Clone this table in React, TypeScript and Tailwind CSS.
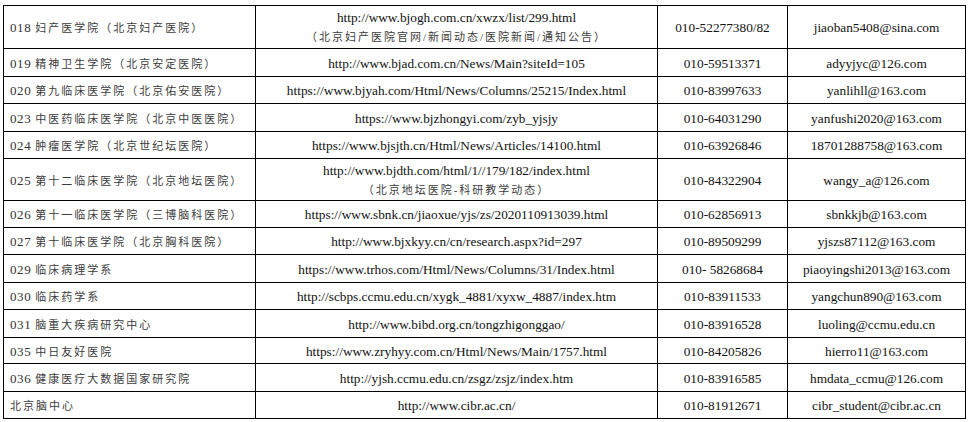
const rows = [
  { code: "018", name: "妇产医学院（北京妇产医院）", url: "http://www.bjogh.com.cn/xwzx/list/299.html", note: "（北京妇产医院官网/新闻动态/医院新闻/通知公告）", phone: "010-52277380/82", email: "jiaoban5408@sina.com", h: "h-[43px]" },
  { code: "019", name: "精神卫生学院（北京安定医院）", url: "http://www.bjad.com.cn/News/Main?siteId=105", phone: "010-59513371", email: "adyyjyc@126.com", h: "h-[28px]" },
  { code: "020", name: "第九临床医学院（北京佑安医院）", url: "https://www.bjyah.com/Html/News/Columns/25215/Index.html", phone: "010-83997633", email: "yanlihll@163.com", h: "h-[27px]" },
  { code: "023", name: "中医药临床医学院（北京中医医院）", url: "https://www.bjzhongyi.com/zyb_yjsjy", phone: "010-64031290", email: "yanfushi2020@163.com", h: "h-[28px]" },
  { code: "024", name: "肿瘤医学院（北京世纪坛医院）", url: "https://www.bjsjth.cn/Html/News/Articles/14100.html", phone: "010-63926846", email: "18701288758@163.com", h: "h-[27px]" },
  { code: "025", name: "第十二临床医学院（北京地坛医院）", url: "http://www.bjdth.com/html/1//179/182/index.html", note: "（北京地坛医院-科研教学动态）", phone: "010-84322904", email: "wangy_a@126.com", h: "h-[42px]" },
  { code: "026", name: "第十一临床医学院（三博脑科医院）", url: "https://www.sbnk.cn/jiaoxue/yjs/zs/2020110913039.html", phone: "010-62856913", email: "sbnkkjb@163.com", h: "h-[27px]" },
  { code: "027", name: "第十临床医学院（北京胸科医院）", url: "http://www.bjxkyy.cn/cn/research.aspx?id=297", phone: "010-89509299", email: "yjszs87112@163.com", h: "h-[27px]" },
  { code: "029", name: "临床病理学系", url: "https://www.trhos.com/Html/News/Columns/31/Index.html", phone: "010- 58268684", email: "piaoyingshi2013@163.com", h: "h-[28px]" },
  { code: "030", name: "临床药学系", url: "http://scbps.ccmu.edu.cn/xygk_4881/xyxw_4887/index.htm", phone: "010-83911533", email: "yangchun890@163.com", h: "h-[27px]" },
  { code: "031", name: "脑重大疾病研究中心", url: "http://www.bibd.org.cn/tongzhigonggao/", phone: "010-83916528", email: "luoling@ccmu.edu.cn", h: "h-[28px]" },
  { code: "035", name: "中日友好医院", url: "https://www.zryhyy.com.cn/Html/News/Main/1757.html", phone: "010-84205826", email: "hierro11@163.com", h: "h-[26px]" },
  { code: "036", name: "健康医疗大数据国家研究院", url: "http://yjsh.ccmu.edu.cn/zsgz/zsjz/index.htm", phone: "010-83916585", email: "hmdata_ccmu@126.com", h: "h-[28px]" },
  { code: "", name: "北京脑中心", url: "http://www.cibr.ac.cn/", phone: "010-81912671", email: "cibr_student@cibr.ac.cn", h: "h-[27px]" },
];

const cjk = "font-['Liberation_Serif','Noto_Sans_CJK_SC',serif] text-[11px] tracking-[2px] text-[#3c3c3c]";
const latin = "font-['Liberation_Serif','Noto_Sans_CJK_SC',serif] text-[13.3px] text-[#111]";

export default function App() {
  return (
    <div className="min-h-screen bg-white pl-[3px] pt-[5px]">
      <table className="table-fixed border-collapse">
        <colgroup>
          <col className="w-[252px]" />
          <col className="w-[402px]" />
          <col className="w-[130px]" />
          <col className="w-[178px]" />
        </colgroup>
        <tbody>
          {rows.map((r) => (
            <tr key={r.name} className={r.h}>
              <td className={`border border-black pl-[6px] pt-[2px] align-middle leading-[16px] ${cjk}`}>
                {r.code && <span className="mr-[4px] text-[13px] tracking-[0.6px] text-[#333]">{r.code}</span>}
                {r.name}
              </td>
              <td className="border border-black p-0 pt-[1px] text-center align-middle">
                <div className={`${latin} leading-[19px]`}>{r.url}</div>
                {r.note && <div className={`${cjk} leading-[20px]`}>{r.note}</div>}
              </td>
              <td className={`border border-black p-0 pt-[2px] text-center align-middle leading-[16px] ${latin}`}>{r.phone}</td>
              <td className={`border border-black p-0 pt-[2px] text-center align-middle leading-[16px] ${latin}`}>{r.email}</td>
            </tr>
          ))}
        </tbody>
      </table>
    </div>
  );
}
